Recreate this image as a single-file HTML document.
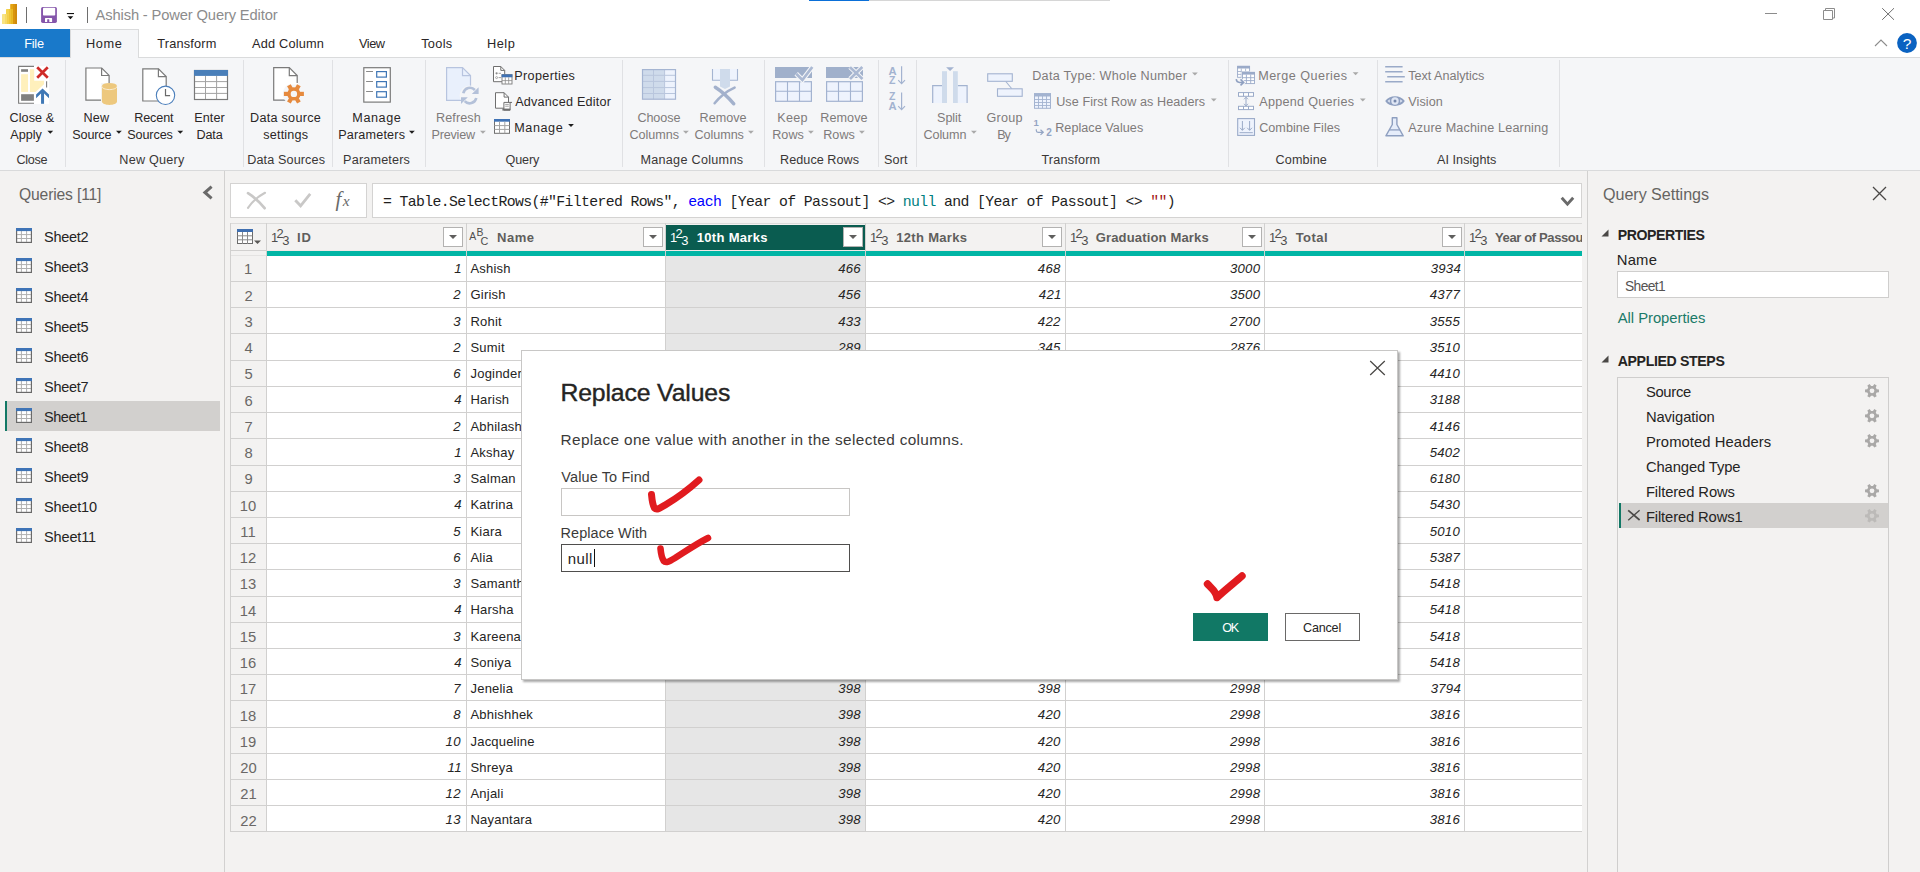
<!DOCTYPE html>
<html><head><meta charset="utf-8"><title>Power Query Editor</title>
<style>
html,body{margin:0;padding:0}
body{width:1920px;height:872px;overflow:hidden;position:relative;background:#f3f2f1;font-family:"Liberation Sans",sans-serif}
#app{position:absolute;left:0;top:0;width:1920px;height:872px;overflow:hidden}
#app div,#app svg,#app span{position:absolute}
#app .t span{position:static}
.t{white-space:pre;line-height:1;font-family:"Liberation Sans",sans-serif}
.sep{width:1px;top:60px;height:107px;background:#e0e1e4}
#tblclip{left:0;top:0;width:1582px;height:872px;overflow:hidden}
</style></head><body><div id="app">
<!-- title bar + tab row -->
<div style="left:0;top:0;width:1920px;height:57px;background:#fff"></div>
<div style="left:809px;top:0;width:60px;height:1px;background:#0a6fd8"></div>
<div style="left:869px;top:0;width:241px;height:1px;background:#d6d6d6"></div>
<!-- ribbon -->
<div style="left:0;top:57px;width:1920px;height:113px;background:#f5f6f8"></div>
<div style="left:0;top:57px;width:1920px;height:1px;background:#dadbdc"></div>
<div style="left:0;top:170px;width:1920px;height:1px;background:#d9dadb"></div>
<!-- File / Home tabs -->
<div style="left:0;top:29px;width:70px;height:28px;background:#1979ca"></div>
<div style="left:70px;top:29px;width:69px;height:29px;background:#f5f6f8;border:1px solid #dadbdc;border-bottom:none;box-sizing:border-box"></div>
<!-- ribbon separators -->
<div class="sep" style="left:65px"></div><div class="sep" style="left:243px"></div><div class="sep" style="left:332px"></div>
<div class="sep" style="left:425px"></div><div class="sep" style="left:622px"></div><div class="sep" style="left:764px"></div>
<div class="sep" style="left:878px"></div><div class="sep" style="left:916px"></div><div class="sep" style="left:1228px"></div>
<div class="sep" style="left:1377px"></div><div class="sep" style="left:1559px"></div>
<!-- left panel -->
<div style="left:224px;top:171px;width:1px;height:701px;background:#d2d1d0"></div>
<div style="left:5px;top:401px;width:215px;height:30px;background:#d2d0ce"></div>
<div style="left:5px;top:401px;width:2px;height:30px;background:#117865"></div>
<svg style="left:202px;top:185px" width="12" height="15" viewBox="0 0 12 15"><path d="M9.600 1.700L2.900 7.500l6.700 5.800" fill="none" stroke="#6a6a6a" stroke-width="3"/></svg>
<!-- formula bar -->
<div style="left:230px;top:183px;width:137px;height:35px;background:#fff;border:1px solid #d4d3d2;box-sizing:border-box"></div>
<div style="left:372px;top:183px;width:1210px;height:35px;background:#fff;border:1px solid #d4d3d2;box-sizing:border-box"></div>
<svg style="left:246px;top:191px" width="21" height="19" viewBox="0 0 21 19"><path d="M2 2.200C8 6 14 11.500 18.600 17.200" stroke="#c9c8c7" stroke-width="2.700" fill="none" stroke-linecap="round"/><path d="M19 1.800C12 5.500 6 11 2 16.800" stroke="#c9c8c7" stroke-width="2.100" fill="none" stroke-linecap="round"/></svg>
<svg style="left:293px;top:192px" width="20" height="17" viewBox="0 0 20 17"><path d="M2.300 8.200l5.300 5.600L17.200 1.800" stroke="#c9c8c7" stroke-width="2.800" fill="none"/></svg>
<span class="t" style="left:335.500px;top:188.600px;font-family:'Liberation Serif',serif;font-style:italic;font-size:21px;color:#6a6a6a">f</span><span class="t" style="left:342.800px;top:193.300px;font-family:'Liberation Serif',serif;font-style:italic;font-size:15.500px;color:#6a6a6a">x</span>
<svg style="left:1560px;top:196px" width="16" height="11" viewBox="0 0 16 11"><path d="M1.700 1.800L7.450 8.200l5.750-6.400" fill="none" stroke="#6a6a6a" stroke-width="2.900"/></svg>
<!-- right panel -->
<div style="left:1587px;top:171px;width:1px;height:701px;background:#d2d1d0"></div>
<svg style="left:1872px;top:186px" width="15" height="15" viewBox="0 0 15 15"><path d="M1 1l13 13M14 1L1 14" stroke="#4a4846" stroke-width="1.3" fill="none"/></svg>
<svg style="left:1601px;top:229px" width="8" height="8" viewBox="0 0 8 8"><path d="M7.5 0.5v7h-7z" fill="#4a4846"/></svg>
<svg style="left:1601px;top:355px" width="8" height="8" viewBox="0 0 8 8"><path d="M7.5 0.5v7h-7z" fill="#4a4846"/></svg>
<div style="left:1617px;top:271px;width:272px;height:27px;background:#fff;border:1px solid #cfcecd;box-sizing:border-box"></div>
<div style="left:1617px;top:377px;width:272px;height:520px;border:1px solid #cfcecd;box-sizing:border-box"></div>
<div style="left:1619px;top:503px;width:269px;height:25px;background:#d2d0ce"></div>
<div style="left:1619px;top:503px;width:2px;height:25px;background:#117865"></div>
<svg style="left:1627px;top:509px" width="14" height="12" viewBox="0 0 14 12"><path d="M1.200 1.400l11.400 9.600" stroke="#4a4846" stroke-width="1.700" fill="none"/><path d="M12.600 1.300L1.200 11.200" stroke="#4a4846" stroke-width="1.300" fill="none"/></svg>
<svg style="left:0;top:0" width="1920" height="872" viewBox="0 0 1920 872"><path d="M1876.73 389.17 L1878.97 389.45 L1878.97 392.15 L1876.73 392.43 L1875.77 394.08 L1876.66 396.16 L1874.31 397.51 L1872.95 395.71 L1871.05 395.71 L1869.69 397.51 L1867.34 396.16 L1868.23 394.08 L1867.27 392.43 L1865.03 392.15 L1865.03 389.45 L1867.27 389.17 L1868.23 387.52 L1867.34 385.44 L1869.69 384.09 L1871.05 385.89 L1872.95 385.89 L1874.31 384.09 L1876.66 385.44 L1875.77 387.52Z M1874.40 390.80 A2.4 2.4 0 1 0 1869.60 390.80 A2.4 2.4 0 1 0 1874.40 390.80Z" fill="#a9a8a7" fill-rule="evenodd"/><path d="M1876.73 414.17 L1878.97 414.45 L1878.97 417.15 L1876.73 417.43 L1875.77 419.08 L1876.66 421.16 L1874.31 422.51 L1872.95 420.71 L1871.05 420.71 L1869.69 422.51 L1867.34 421.16 L1868.23 419.08 L1867.27 417.43 L1865.03 417.15 L1865.03 414.45 L1867.27 414.17 L1868.23 412.52 L1867.34 410.44 L1869.69 409.09 L1871.05 410.89 L1872.95 410.89 L1874.31 409.09 L1876.66 410.44 L1875.77 412.52Z M1874.40 415.80 A2.4 2.4 0 1 0 1869.60 415.80 A2.4 2.4 0 1 0 1874.40 415.80Z" fill="#a9a8a7" fill-rule="evenodd"/><path d="M1876.73 439.17 L1878.97 439.45 L1878.97 442.15 L1876.73 442.43 L1875.77 444.08 L1876.66 446.16 L1874.31 447.51 L1872.95 445.71 L1871.05 445.71 L1869.69 447.51 L1867.34 446.16 L1868.23 444.08 L1867.27 442.43 L1865.03 442.15 L1865.03 439.45 L1867.27 439.17 L1868.23 437.52 L1867.34 435.44 L1869.69 434.09 L1871.05 435.89 L1872.95 435.89 L1874.31 434.09 L1876.66 435.44 L1875.77 437.52Z M1874.40 440.80 A2.4 2.4 0 1 0 1869.60 440.80 A2.4 2.4 0 1 0 1874.40 440.80Z" fill="#a9a8a7" fill-rule="evenodd"/><path d="M1876.73 489.17 L1878.97 489.45 L1878.97 492.15 L1876.73 492.43 L1875.77 494.08 L1876.66 496.16 L1874.31 497.51 L1872.95 495.71 L1871.05 495.71 L1869.69 497.51 L1867.34 496.16 L1868.23 494.08 L1867.27 492.43 L1865.03 492.15 L1865.03 489.45 L1867.27 489.17 L1868.23 487.52 L1867.34 485.44 L1869.69 484.09 L1871.05 485.89 L1872.95 485.89 L1874.31 484.09 L1876.66 485.44 L1875.77 487.52Z M1874.40 490.80 A2.4 2.4 0 1 0 1869.60 490.80 A2.4 2.4 0 1 0 1874.40 490.80Z" fill="#a9a8a7" fill-rule="evenodd"/><path d="M1876.73 514.17 L1878.97 514.45 L1878.97 517.15 L1876.73 517.43 L1875.77 519.08 L1876.66 521.16 L1874.31 522.51 L1872.95 520.71 L1871.05 520.71 L1869.69 522.51 L1867.34 521.16 L1868.23 519.08 L1867.27 517.43 L1865.03 517.15 L1865.03 514.45 L1867.27 514.17 L1868.23 512.52 L1867.34 510.44 L1869.69 509.09 L1871.05 510.89 L1872.95 510.89 L1874.31 509.09 L1876.66 510.44 L1875.77 512.52Z M1874.40 515.80 A2.4 2.4 0 1 0 1869.60 515.80 A2.4 2.4 0 1 0 1874.40 515.80Z" fill="#bcbab8" fill-rule="evenodd"/>
<g transform="translate(16 228)"><rect x="0.55" y="0.55" width="14.9" height="13.9" fill="#fff" stroke="#6a6a6a" stroke-width="1.1"/><path d="M5.4 3v11.5M10.6 3v11.5M0.5 6.6h15M0.5 10.5h15" stroke="#b0b0b0" stroke-width="1" fill="none"/><rect x="0.55" y="0.55" width="14.9" height="13.9" fill="none" stroke="#6a6a6a" stroke-width="1.1"/><rect x="0" y="0" width="16" height="3.1" fill="#3f74b6"/></g>
<g transform="translate(16 258)"><rect x="0.55" y="0.55" width="14.9" height="13.9" fill="#fff" stroke="#6a6a6a" stroke-width="1.1"/><path d="M5.4 3v11.5M10.6 3v11.5M0.5 6.6h15M0.5 10.5h15" stroke="#b0b0b0" stroke-width="1" fill="none"/><rect x="0.55" y="0.55" width="14.9" height="13.9" fill="none" stroke="#6a6a6a" stroke-width="1.1"/><rect x="0" y="0" width="16" height="3.1" fill="#3f74b6"/></g>
<g transform="translate(16 288)"><rect x="0.55" y="0.55" width="14.9" height="13.9" fill="#fff" stroke="#6a6a6a" stroke-width="1.1"/><path d="M5.4 3v11.5M10.6 3v11.5M0.5 6.6h15M0.5 10.5h15" stroke="#b0b0b0" stroke-width="1" fill="none"/><rect x="0.55" y="0.55" width="14.9" height="13.9" fill="none" stroke="#6a6a6a" stroke-width="1.1"/><rect x="0" y="0" width="16" height="3.1" fill="#3f74b6"/></g>
<g transform="translate(16 318)"><rect x="0.55" y="0.55" width="14.9" height="13.9" fill="#fff" stroke="#6a6a6a" stroke-width="1.1"/><path d="M5.4 3v11.5M10.6 3v11.5M0.5 6.6h15M0.5 10.5h15" stroke="#b0b0b0" stroke-width="1" fill="none"/><rect x="0.55" y="0.55" width="14.9" height="13.9" fill="none" stroke="#6a6a6a" stroke-width="1.1"/><rect x="0" y="0" width="16" height="3.1" fill="#3f74b6"/></g>
<g transform="translate(16 348)"><rect x="0.55" y="0.55" width="14.9" height="13.9" fill="#fff" stroke="#6a6a6a" stroke-width="1.1"/><path d="M5.4 3v11.5M10.6 3v11.5M0.5 6.6h15M0.5 10.5h15" stroke="#b0b0b0" stroke-width="1" fill="none"/><rect x="0.55" y="0.55" width="14.9" height="13.9" fill="none" stroke="#6a6a6a" stroke-width="1.1"/><rect x="0" y="0" width="16" height="3.1" fill="#3f74b6"/></g>
<g transform="translate(16 378)"><rect x="0.55" y="0.55" width="14.9" height="13.9" fill="#fff" stroke="#6a6a6a" stroke-width="1.1"/><path d="M5.4 3v11.5M10.6 3v11.5M0.5 6.6h15M0.5 10.5h15" stroke="#b0b0b0" stroke-width="1" fill="none"/><rect x="0.55" y="0.55" width="14.9" height="13.9" fill="none" stroke="#6a6a6a" stroke-width="1.1"/><rect x="0" y="0" width="16" height="3.1" fill="#3f74b6"/></g>
<g transform="translate(16 408)"><rect x="0.55" y="0.55" width="14.9" height="13.9" fill="#fff" stroke="#6a6a6a" stroke-width="1.1"/><path d="M5.4 3v11.5M10.6 3v11.5M0.5 6.6h15M0.5 10.5h15" stroke="#b0b0b0" stroke-width="1" fill="none"/><rect x="0.55" y="0.55" width="14.9" height="13.9" fill="none" stroke="#6a6a6a" stroke-width="1.1"/><rect x="0" y="0" width="16" height="3.1" fill="#3f74b6"/></g>
<g transform="translate(16 438)"><rect x="0.55" y="0.55" width="14.9" height="13.9" fill="#fff" stroke="#6a6a6a" stroke-width="1.1"/><path d="M5.4 3v11.5M10.6 3v11.5M0.5 6.6h15M0.5 10.5h15" stroke="#b0b0b0" stroke-width="1" fill="none"/><rect x="0.55" y="0.55" width="14.9" height="13.9" fill="none" stroke="#6a6a6a" stroke-width="1.1"/><rect x="0" y="0" width="16" height="3.1" fill="#3f74b6"/></g>
<g transform="translate(16 468)"><rect x="0.55" y="0.55" width="14.9" height="13.9" fill="#fff" stroke="#6a6a6a" stroke-width="1.1"/><path d="M5.4 3v11.5M10.6 3v11.5M0.5 6.6h15M0.5 10.5h15" stroke="#b0b0b0" stroke-width="1" fill="none"/><rect x="0.55" y="0.55" width="14.9" height="13.9" fill="none" stroke="#6a6a6a" stroke-width="1.1"/><rect x="0" y="0" width="16" height="3.1" fill="#3f74b6"/></g>
<g transform="translate(16 498)"><rect x="0.55" y="0.55" width="14.9" height="13.9" fill="#fff" stroke="#6a6a6a" stroke-width="1.1"/><path d="M5.4 3v11.5M10.6 3v11.5M0.5 6.6h15M0.5 10.5h15" stroke="#b0b0b0" stroke-width="1" fill="none"/><rect x="0.55" y="0.55" width="14.9" height="13.9" fill="none" stroke="#6a6a6a" stroke-width="1.1"/><rect x="0" y="0" width="16" height="3.1" fill="#3f74b6"/></g>
<g transform="translate(16 528)"><rect x="0.55" y="0.55" width="14.9" height="13.9" fill="#fff" stroke="#6a6a6a" stroke-width="1.1"/><path d="M5.4 3v11.5M10.6 3v11.5M0.5 6.6h15M0.5 10.5h15" stroke="#b0b0b0" stroke-width="1" fill="none"/><rect x="0.55" y="0.55" width="14.9" height="13.9" fill="none" stroke="#6a6a6a" stroke-width="1.1"/><rect x="0" y="0" width="16" height="3.1" fill="#3f74b6"/></g>
</svg>
<!-- table -->
<div id="tblclip">
<div style="left:230px;top:223px;width:1352px;height:28px;background:#f3f2f1"></div>
<div style="left:666px;top:225px;width:199px;height:25px;background:#0a5c50"></div>
<div style="left:267px;top:250px;width:1315px;height:1px;background:#f1e8e6"></div>
<div style="left:230px;top:251px;width:36px;height:580px;background:#f3f2f1"></div>
<div style="left:267px;top:256px;width:1315px;height:575px;background:#fff"></div>
<div style="left:666px;top:256px;width:199px;height:575px;background:#e6e6e6"></div>
<div style="left:267px;top:251px;width:1315px;height:5px;background:#01b5a5"></div>
<div style="left:230px;top:223px;width:1352px;height:1px;background:#dcdbda"></div>
<div style="left:230px;top:250px;width:37px;height:1px;background:#d1d0cf"></div>
<div style="left:230px;top:255px;width:37px;height:1px;background:#e4e3e2"></div>
<div style="left:230px;top:281px;width:1352px;height:1px;background:#d1d0cf"></div>
<div style="left:230px;top:307px;width:1352px;height:1px;background:#d1d0cf"></div>
<div style="left:230px;top:333px;width:1352px;height:1px;background:#d1d0cf"></div>
<div style="left:230px;top:360px;width:1352px;height:1px;background:#d1d0cf"></div>
<div style="left:230px;top:386px;width:1352px;height:1px;background:#d1d0cf"></div>
<div style="left:230px;top:412px;width:1352px;height:1px;background:#d1d0cf"></div>
<div style="left:230px;top:438px;width:1352px;height:1px;background:#d1d0cf"></div>
<div style="left:230px;top:465px;width:1352px;height:1px;background:#d1d0cf"></div>
<div style="left:230px;top:491px;width:1352px;height:1px;background:#d1d0cf"></div>
<div style="left:230px;top:517px;width:1352px;height:1px;background:#d1d0cf"></div>
<div style="left:230px;top:543px;width:1352px;height:1px;background:#d1d0cf"></div>
<div style="left:230px;top:569px;width:1352px;height:1px;background:#d1d0cf"></div>
<div style="left:230px;top:596px;width:1352px;height:1px;background:#d1d0cf"></div>
<div style="left:230px;top:622px;width:1352px;height:1px;background:#d1d0cf"></div>
<div style="left:230px;top:648px;width:1352px;height:1px;background:#d1d0cf"></div>
<div style="left:230px;top:674px;width:1352px;height:1px;background:#d1d0cf"></div>
<div style="left:230px;top:700px;width:1352px;height:1px;background:#d1d0cf"></div>
<div style="left:230px;top:727px;width:1352px;height:1px;background:#d1d0cf"></div>
<div style="left:230px;top:753px;width:1352px;height:1px;background:#d1d0cf"></div>
<div style="left:230px;top:779px;width:1352px;height:1px;background:#d1d0cf"></div>
<div style="left:230px;top:805px;width:1352px;height:1px;background:#d1d0cf"></div>
<div style="left:230px;top:831px;width:1352px;height:1px;background:#d1d0cf"></div>
<div style="left:230px;top:223px;width:1px;height:609px;background:#d1d0cf"></div>
<div style="left:266px;top:223px;width:1px;height:609px;background:#d1d0cf"></div>
<div style="left:466px;top:223px;width:1px;height:609px;background:#d1d0cf"></div>
<div style="left:665px;top:223px;width:1px;height:609px;background:#d1d0cf"></div>
<div style="left:865px;top:223px;width:1px;height:609px;background:#d1d0cf"></div>
<div style="left:1065px;top:223px;width:1px;height:609px;background:#d1d0cf"></div>
<div style="left:1264px;top:223px;width:1px;height:609px;background:#d1d0cf"></div>
<div style="left:1464px;top:223px;width:1px;height:609px;background:#d1d0cf"></div>
<div style="left:443.2px;top:227px;width:20px;height:20px;background:#fff;border:1px solid #b3b2b1;box-sizing:border-box"></div>
<svg style="left:449.2px;top:235px" width="8" height="4" viewBox="0 0 8 4"><path d="M0 0h8L4 4z" fill="#5f5e5d"/></svg>
<div style="left:642.8000000000001px;top:227px;width:20px;height:20px;background:#fff;border:1px solid #b3b2b1;box-sizing:border-box"></div>
<svg style="left:648.8000000000001px;top:235px" width="8" height="4" viewBox="0 0 8 4"><path d="M0 0h8L4 4z" fill="#5f5e5d"/></svg>
<div style="left:842.5px;top:227px;width:20px;height:20px;background:#fff;border:1px solid #b3b2b1;box-sizing:border-box"></div>
<svg style="left:848.5px;top:235px" width="8" height="4" viewBox="0 0 8 4"><path d="M0 0h8L4 4z" fill="#5f5e5d"/></svg>
<div style="left:1042.2px;top:227px;width:20px;height:20px;background:#fff;border:1px solid #b3b2b1;box-sizing:border-box"></div>
<svg style="left:1048.2px;top:235px" width="8" height="4" viewBox="0 0 8 4"><path d="M0 0h8L4 4z" fill="#5f5e5d"/></svg>
<div style="left:1241.8px;top:227px;width:20px;height:20px;background:#fff;border:1px solid #b3b2b1;box-sizing:border-box"></div>
<svg style="left:1247.8px;top:235px" width="8" height="4" viewBox="0 0 8 4"><path d="M0 0h8L4 4z" fill="#5f5e5d"/></svg>
<div style="left:1441.5px;top:227px;width:20px;height:20px;background:#fff;border:1px solid #b3b2b1;box-sizing:border-box"></div>
<svg style="left:1447.5px;top:235px" width="8" height="4" viewBox="0 0 8 4"><path d="M0 0h8L4 4z" fill="#5f5e5d"/></svg>
<span class="t" style="left:270.9px;top:231.5px;font-size:12.9px;color:#4f4e4d">1</span><span class="t" style="left:276.6px;top:227.5px;font-size:12.9px;color:#4f4e4d">2</span><span class="t" style="left:282.3px;top:235.0px;font-size:12.9px;color:#4f4e4d">3</span>
<span class="t" style="left:669.9px;top:231.5px;font-size:12.9px;color:#fff">1</span><span class="t" style="left:675.6px;top:227.5px;font-size:12.9px;color:#fff">2</span><span class="t" style="left:681.3px;top:235.0px;font-size:12.9px;color:#fff">3</span>
<span class="t" style="left:869.9px;top:231.5px;font-size:12.9px;color:#4f4e4d">1</span><span class="t" style="left:875.6px;top:227.5px;font-size:12.9px;color:#4f4e4d">2</span><span class="t" style="left:881.3px;top:235.0px;font-size:12.9px;color:#4f4e4d">3</span>
<span class="t" style="left:1069.9px;top:231.5px;font-size:12.9px;color:#4f4e4d">1</span><span class="t" style="left:1075.6px;top:227.5px;font-size:12.9px;color:#4f4e4d">2</span><span class="t" style="left:1081.3px;top:235.0px;font-size:12.9px;color:#4f4e4d">3</span>
<span class="t" style="left:1268.9px;top:231.5px;font-size:12.9px;color:#4f4e4d">1</span><span class="t" style="left:1274.6px;top:227.5px;font-size:12.9px;color:#4f4e4d">2</span><span class="t" style="left:1280.3px;top:235.0px;font-size:12.9px;color:#4f4e4d">3</span>
<span class="t" style="left:1468.9px;top:231.5px;font-size:12.9px;color:#4f4e4d">1</span><span class="t" style="left:1474.6px;top:227.5px;font-size:12.9px;color:#4f4e4d">2</span><span class="t" style="left:1480.3px;top:235.0px;font-size:12.9px;color:#4f4e4d">3</span>
<span class="t" style="left:469.2px;top:231.9px;font-size:10.4px;color:#4f4e4d">A</span><span class="t" style="left:476.5px;top:227.8px;font-size:10.4px;color:#4f4e4d">B</span><span class="t" style="left:480.6px;top:235.8px;font-size:10.8px;color:#4f4e4d">C</span>
<svg style="left:237px;top:229px" width="24" height="17" viewBox="0 0 24 17">
<rect x="0.5" y="0.5" width="15" height="14" fill="#fff" stroke="#6b6b6b"/><rect x="0" y="0" width="16" height="3" fill="#3f6fb0"/>
<path d="M0.5 6.8h15M0.5 10.8h15M5.5 3v12M10.5 3v12" stroke="#8a8a8a" fill="none"/><path d="M17 11.5h7L20.5 15z" fill="#5a5856"/></svg>
<span class="t" style="left:243.90px;top:262.02px;font-size:14.77px;color:#6a6866;">1</span>
<span class="t" style="left:454.20px;top:262.02px;font-size:13.2px;color:#252423;letter-spacing:0.250px;font-style:italic;">1</span>
<span class="t" style="left:470.50px;top:262.02px;font-size:13.0px;color:#252423;letter-spacing:0.200px;">Ashish</span>
<span class="t" style="left:838.13px;top:262.02px;font-size:13.2px;color:#252423;letter-spacing:0.250px;font-style:italic;">466</span>
<span class="t" style="left:1037.83px;top:262.02px;font-size:13.2px;color:#252423;letter-spacing:0.250px;font-style:italic;">468</span>
<span class="t" style="left:1229.95px;top:262.02px;font-size:13.2px;color:#252423;letter-spacing:0.250px;font-style:italic;">3000</span>
<span class="t" style="left:1430.65px;top:262.02px;font-size:13.2px;color:#252423;letter-spacing:0.250px;font-style:italic;">3934</span>
<span class="t" style="left:244.40px;top:289.02px;font-size:14.77px;color:#6a6866;">2</span>
<span class="t" style="left:453.20px;top:288.02px;font-size:13.2px;color:#252423;letter-spacing:0.250px;font-style:italic;">2</span>
<span class="t" style="left:470.50px;top:288.02px;font-size:13.0px;color:#252423;letter-spacing:0.200px;">Girish</span>
<span class="t" style="left:838.13px;top:288.02px;font-size:13.2px;color:#252423;letter-spacing:0.250px;font-style:italic;">456</span>
<span class="t" style="left:1038.83px;top:288.02px;font-size:13.2px;color:#252423;letter-spacing:0.250px;font-style:italic;">421</span>
<span class="t" style="left:1229.95px;top:288.02px;font-size:13.2px;color:#252423;letter-spacing:0.250px;font-style:italic;">3500</span>
<span class="t" style="left:1429.65px;top:288.02px;font-size:13.2px;color:#252423;letter-spacing:0.250px;font-style:italic;">4377</span>
<span class="t" style="left:244.40px;top:315.02px;font-size:14.77px;color:#6a6866;">3</span>
<span class="t" style="left:453.20px;top:315.02px;font-size:13.2px;color:#252423;letter-spacing:0.250px;font-style:italic;">3</span>
<span class="t" style="left:470.50px;top:315.02px;font-size:13.0px;color:#252423;letter-spacing:0.200px;">Rohit</span>
<span class="t" style="left:838.13px;top:315.02px;font-size:13.2px;color:#252423;letter-spacing:0.250px;font-style:italic;">433</span>
<span class="t" style="left:1037.83px;top:315.02px;font-size:13.2px;color:#252423;letter-spacing:0.250px;font-style:italic;">422</span>
<span class="t" style="left:1229.95px;top:315.02px;font-size:13.2px;color:#252423;letter-spacing:0.250px;font-style:italic;">2700</span>
<span class="t" style="left:1429.65px;top:315.02px;font-size:13.2px;color:#252423;letter-spacing:0.250px;font-style:italic;">3555</span>
<span class="t" style="left:244.40px;top:341.02px;font-size:14.77px;color:#6a6866;">4</span>
<span class="t" style="left:453.20px;top:341.02px;font-size:13.2px;color:#252423;letter-spacing:0.250px;font-style:italic;">2</span>
<span class="t" style="left:470.50px;top:341.02px;font-size:13.0px;color:#252423;letter-spacing:0.200px;">Sumit</span>
<span class="t" style="left:838.13px;top:341.02px;font-size:13.2px;color:#252423;letter-spacing:0.250px;font-style:italic;">289</span>
<span class="t" style="left:1037.83px;top:341.02px;font-size:13.2px;color:#252423;letter-spacing:0.250px;font-style:italic;">345</span>
<span class="t" style="left:1229.95px;top:341.02px;font-size:13.2px;color:#252423;letter-spacing:0.250px;font-style:italic;">2876</span>
<span class="t" style="left:1429.65px;top:341.02px;font-size:13.2px;color:#252423;letter-spacing:0.250px;font-style:italic;">3510</span>
<span class="t" style="left:244.40px;top:367.02px;font-size:14.77px;color:#6a6866;">5</span>
<span class="t" style="left:453.20px;top:367.02px;font-size:13.2px;color:#252423;letter-spacing:0.250px;font-style:italic;">6</span>
<span class="t" style="left:470.50px;top:367.02px;font-size:13.0px;color:#252423;letter-spacing:0.200px;">Joginder</span>
<span class="t" style="left:838.13px;top:367.02px;font-size:13.2px;color:#252423;letter-spacing:0.250px;font-style:italic;">410</span>
<span class="t" style="left:1037.83px;top:367.02px;font-size:13.2px;color:#252423;letter-spacing:0.250px;font-style:italic;">400</span>
<span class="t" style="left:1229.95px;top:367.02px;font-size:13.2px;color:#252423;letter-spacing:0.250px;font-style:italic;">3600</span>
<span class="t" style="left:1429.65px;top:367.02px;font-size:13.2px;color:#252423;letter-spacing:0.250px;font-style:italic;">4410</span>
<span class="t" style="left:244.40px;top:394.02px;font-size:14.77px;color:#6a6866;">6</span>
<span class="t" style="left:454.20px;top:393.02px;font-size:13.2px;color:#252423;letter-spacing:0.250px;font-style:italic;">4</span>
<span class="t" style="left:470.50px;top:393.02px;font-size:13.0px;color:#252423;letter-spacing:0.200px;">Harish</span>
<span class="t" style="left:838.13px;top:393.02px;font-size:13.2px;color:#252423;letter-spacing:0.250px;font-style:italic;">388</span>
<span class="t" style="left:1037.83px;top:393.02px;font-size:13.2px;color:#252423;letter-spacing:0.250px;font-style:italic;">300</span>
<span class="t" style="left:1229.95px;top:393.02px;font-size:13.2px;color:#252423;letter-spacing:0.250px;font-style:italic;">2500</span>
<span class="t" style="left:1429.65px;top:393.02px;font-size:13.2px;color:#252423;letter-spacing:0.250px;font-style:italic;">3188</span>
<span class="t" style="left:244.40px;top:420.02px;font-size:14.77px;color:#6a6866;">7</span>
<span class="t" style="left:453.20px;top:420.02px;font-size:13.2px;color:#252423;letter-spacing:0.250px;font-style:italic;">2</span>
<span class="t" style="left:470.50px;top:420.02px;font-size:13.0px;color:#252423;letter-spacing:0.200px;">Abhilasha</span>
<span class="t" style="left:838.13px;top:420.02px;font-size:13.2px;color:#252423;letter-spacing:0.250px;font-style:italic;">446</span>
<span class="t" style="left:1037.83px;top:420.02px;font-size:13.2px;color:#252423;letter-spacing:0.250px;font-style:italic;">400</span>
<span class="t" style="left:1229.95px;top:420.02px;font-size:13.2px;color:#252423;letter-spacing:0.250px;font-style:italic;">3300</span>
<span class="t" style="left:1429.65px;top:420.02px;font-size:13.2px;color:#252423;letter-spacing:0.250px;font-style:italic;">4146</span>
<span class="t" style="left:244.40px;top:446.02px;font-size:14.77px;color:#6a6866;">8</span>
<span class="t" style="left:454.20px;top:446.02px;font-size:13.2px;color:#252423;letter-spacing:0.250px;font-style:italic;">1</span>
<span class="t" style="left:470.50px;top:446.02px;font-size:13.0px;color:#252423;letter-spacing:0.200px;">Akshay</span>
<span class="t" style="left:838.13px;top:446.02px;font-size:13.2px;color:#252423;letter-spacing:0.250px;font-style:italic;">402</span>
<span class="t" style="left:1037.83px;top:446.02px;font-size:13.2px;color:#252423;letter-spacing:0.250px;font-style:italic;">500</span>
<span class="t" style="left:1229.95px;top:446.02px;font-size:13.2px;color:#252423;letter-spacing:0.250px;font-style:italic;">4500</span>
<span class="t" style="left:1429.65px;top:446.02px;font-size:13.2px;color:#252423;letter-spacing:0.250px;font-style:italic;">5402</span>
<span class="t" style="left:244.40px;top:472.02px;font-size:14.77px;color:#6a6866;">9</span>
<span class="t" style="left:453.20px;top:472.02px;font-size:13.2px;color:#252423;letter-spacing:0.250px;font-style:italic;">3</span>
<span class="t" style="left:470.50px;top:472.02px;font-size:13.0px;color:#252423;letter-spacing:0.200px;">Salman</span>
<span class="t" style="left:838.13px;top:472.02px;font-size:13.2px;color:#252423;letter-spacing:0.250px;font-style:italic;">480</span>
<span class="t" style="left:1037.83px;top:472.02px;font-size:13.2px;color:#252423;letter-spacing:0.250px;font-style:italic;">700</span>
<span class="t" style="left:1229.95px;top:472.02px;font-size:13.2px;color:#252423;letter-spacing:0.250px;font-style:italic;">5000</span>
<span class="t" style="left:1429.65px;top:472.02px;font-size:13.2px;color:#252423;letter-spacing:0.250px;font-style:italic;">6180</span>
<span class="t" style="left:239.79px;top:499.02px;font-size:14.77px;color:#6a6866;">10</span>
<span class="t" style="left:454.20px;top:498.02px;font-size:13.2px;color:#252423;letter-spacing:0.250px;font-style:italic;">4</span>
<span class="t" style="left:470.50px;top:498.02px;font-size:13.0px;color:#252423;letter-spacing:0.200px;">Katrina</span>
<span class="t" style="left:838.13px;top:498.02px;font-size:13.2px;color:#252423;letter-spacing:0.250px;font-style:italic;">430</span>
<span class="t" style="left:1037.83px;top:498.02px;font-size:13.2px;color:#252423;letter-spacing:0.250px;font-style:italic;">500</span>
<span class="t" style="left:1229.95px;top:498.02px;font-size:13.2px;color:#252423;letter-spacing:0.250px;font-style:italic;">4500</span>
<span class="t" style="left:1429.65px;top:498.02px;font-size:13.2px;color:#252423;letter-spacing:0.250px;font-style:italic;">5430</span>
<span class="t" style="left:240.34px;top:525.02px;font-size:14.77px;color:#6a6866;">11</span>
<span class="t" style="left:453.20px;top:525.02px;font-size:13.2px;color:#252423;letter-spacing:0.250px;font-style:italic;">5</span>
<span class="t" style="left:470.50px;top:525.02px;font-size:13.0px;color:#252423;letter-spacing:0.200px;">Kiara</span>
<span class="t" style="left:838.13px;top:525.02px;font-size:13.2px;color:#252423;letter-spacing:0.250px;font-style:italic;">410</span>
<span class="t" style="left:1037.83px;top:525.02px;font-size:13.2px;color:#252423;letter-spacing:0.250px;font-style:italic;">400</span>
<span class="t" style="left:1229.95px;top:525.02px;font-size:13.2px;color:#252423;letter-spacing:0.250px;font-style:italic;">4200</span>
<span class="t" style="left:1429.65px;top:525.02px;font-size:13.2px;color:#252423;letter-spacing:0.250px;font-style:italic;">5010</span>
<span class="t" style="left:239.79px;top:551.02px;font-size:14.77px;color:#6a6866;">12</span>
<span class="t" style="left:453.20px;top:551.02px;font-size:13.2px;color:#252423;letter-spacing:0.250px;font-style:italic;">6</span>
<span class="t" style="left:470.50px;top:551.02px;font-size:13.0px;color:#252423;letter-spacing:0.200px;">Alia</span>
<span class="t" style="left:838.13px;top:551.02px;font-size:13.2px;color:#252423;letter-spacing:0.250px;font-style:italic;">387</span>
<span class="t" style="left:1037.83px;top:551.02px;font-size:13.2px;color:#252423;letter-spacing:0.250px;font-style:italic;">500</span>
<span class="t" style="left:1229.95px;top:551.02px;font-size:13.2px;color:#252423;letter-spacing:0.250px;font-style:italic;">4500</span>
<span class="t" style="left:1429.65px;top:551.02px;font-size:13.2px;color:#252423;letter-spacing:0.250px;font-style:italic;">5387</span>
<span class="t" style="left:239.79px;top:577.02px;font-size:14.77px;color:#6a6866;">13</span>
<span class="t" style="left:453.20px;top:577.02px;font-size:13.2px;color:#252423;letter-spacing:0.250px;font-style:italic;">3</span>
<span class="t" style="left:470.50px;top:577.02px;font-size:13.0px;color:#252423;letter-spacing:0.200px;">Samantha</span>
<span class="t" style="left:838.13px;top:577.02px;font-size:13.2px;color:#252423;letter-spacing:0.250px;font-style:italic;">418</span>
<span class="t" style="left:1037.83px;top:577.02px;font-size:13.2px;color:#252423;letter-spacing:0.250px;font-style:italic;">500</span>
<span class="t" style="left:1229.95px;top:577.02px;font-size:13.2px;color:#252423;letter-spacing:0.250px;font-style:italic;">4500</span>
<span class="t" style="left:1429.65px;top:577.02px;font-size:13.2px;color:#252423;letter-spacing:0.250px;font-style:italic;">5418</span>
<span class="t" style="left:239.79px;top:604.02px;font-size:14.77px;color:#6a6866;">14</span>
<span class="t" style="left:454.20px;top:603.02px;font-size:13.2px;color:#252423;letter-spacing:0.250px;font-style:italic;">4</span>
<span class="t" style="left:470.50px;top:603.02px;font-size:13.0px;color:#252423;letter-spacing:0.200px;">Harsha</span>
<span class="t" style="left:838.13px;top:603.02px;font-size:13.2px;color:#252423;letter-spacing:0.250px;font-style:italic;">418</span>
<span class="t" style="left:1037.83px;top:603.02px;font-size:13.2px;color:#252423;letter-spacing:0.250px;font-style:italic;">500</span>
<span class="t" style="left:1229.95px;top:603.02px;font-size:13.2px;color:#252423;letter-spacing:0.250px;font-style:italic;">4500</span>
<span class="t" style="left:1429.65px;top:603.02px;font-size:13.2px;color:#252423;letter-spacing:0.250px;font-style:italic;">5418</span>
<span class="t" style="left:239.79px;top:630.02px;font-size:14.77px;color:#6a6866;">15</span>
<span class="t" style="left:453.20px;top:630.02px;font-size:13.2px;color:#252423;letter-spacing:0.250px;font-style:italic;">3</span>
<span class="t" style="left:470.50px;top:630.02px;font-size:13.0px;color:#252423;letter-spacing:0.200px;">Kareena</span>
<span class="t" style="left:838.13px;top:630.02px;font-size:13.2px;color:#252423;letter-spacing:0.250px;font-style:italic;">418</span>
<span class="t" style="left:1037.83px;top:630.02px;font-size:13.2px;color:#252423;letter-spacing:0.250px;font-style:italic;">500</span>
<span class="t" style="left:1229.95px;top:630.02px;font-size:13.2px;color:#252423;letter-spacing:0.250px;font-style:italic;">4500</span>
<span class="t" style="left:1429.65px;top:630.02px;font-size:13.2px;color:#252423;letter-spacing:0.250px;font-style:italic;">5418</span>
<span class="t" style="left:239.79px;top:656.02px;font-size:14.77px;color:#6a6866;">16</span>
<span class="t" style="left:454.20px;top:656.02px;font-size:13.2px;color:#252423;letter-spacing:0.250px;font-style:italic;">4</span>
<span class="t" style="left:470.50px;top:656.02px;font-size:13.0px;color:#252423;letter-spacing:0.200px;">Soniya</span>
<span class="t" style="left:838.13px;top:656.02px;font-size:13.2px;color:#252423;letter-spacing:0.250px;font-style:italic;">418</span>
<span class="t" style="left:1037.83px;top:656.02px;font-size:13.2px;color:#252423;letter-spacing:0.250px;font-style:italic;">500</span>
<span class="t" style="left:1229.95px;top:656.02px;font-size:13.2px;color:#252423;letter-spacing:0.250px;font-style:italic;">4500</span>
<span class="t" style="left:1429.65px;top:656.02px;font-size:13.2px;color:#252423;letter-spacing:0.250px;font-style:italic;">5418</span>
<span class="t" style="left:239.79px;top:682.02px;font-size:14.77px;color:#6a6866;">17</span>
<span class="t" style="left:453.20px;top:682.02px;font-size:13.2px;color:#252423;letter-spacing:0.250px;font-style:italic;">7</span>
<span class="t" style="left:470.50px;top:682.02px;font-size:13.0px;color:#252423;letter-spacing:0.200px;">Jenelia</span>
<span class="t" style="left:838.13px;top:682.02px;font-size:13.2px;color:#252423;letter-spacing:0.250px;font-style:italic;">398</span>
<span class="t" style="left:1037.83px;top:682.02px;font-size:13.2px;color:#252423;letter-spacing:0.250px;font-style:italic;">398</span>
<span class="t" style="left:1229.95px;top:682.02px;font-size:13.2px;color:#252423;letter-spacing:0.250px;font-style:italic;">2998</span>
<span class="t" style="left:1430.65px;top:682.02px;font-size:13.2px;color:#252423;letter-spacing:0.250px;font-style:italic;">3794</span>
<span class="t" style="left:239.79px;top:709.02px;font-size:14.77px;color:#6a6866;">18</span>
<span class="t" style="left:453.20px;top:708.02px;font-size:13.2px;color:#252423;letter-spacing:0.250px;font-style:italic;">8</span>
<span class="t" style="left:470.50px;top:708.02px;font-size:13.0px;color:#252423;letter-spacing:0.200px;">Abhishhek</span>
<span class="t" style="left:838.13px;top:708.02px;font-size:13.2px;color:#252423;letter-spacing:0.250px;font-style:italic;">398</span>
<span class="t" style="left:1037.83px;top:708.02px;font-size:13.2px;color:#252423;letter-spacing:0.250px;font-style:italic;">420</span>
<span class="t" style="left:1229.95px;top:708.02px;font-size:13.2px;color:#252423;letter-spacing:0.250px;font-style:italic;">2998</span>
<span class="t" style="left:1429.65px;top:708.02px;font-size:13.2px;color:#252423;letter-spacing:0.250px;font-style:italic;">3816</span>
<span class="t" style="left:239.79px;top:735.02px;font-size:14.77px;color:#6a6866;">19</span>
<span class="t" style="left:445.62px;top:735.02px;font-size:13.2px;color:#252423;letter-spacing:0.250px;font-style:italic;">10</span>
<span class="t" style="left:470.50px;top:735.02px;font-size:13.0px;color:#252423;letter-spacing:0.200px;">Jacqueline</span>
<span class="t" style="left:838.13px;top:735.02px;font-size:13.2px;color:#252423;letter-spacing:0.250px;font-style:italic;">398</span>
<span class="t" style="left:1037.83px;top:735.02px;font-size:13.2px;color:#252423;letter-spacing:0.250px;font-style:italic;">420</span>
<span class="t" style="left:1229.95px;top:735.02px;font-size:13.2px;color:#252423;letter-spacing:0.250px;font-style:italic;">2998</span>
<span class="t" style="left:1429.65px;top:735.02px;font-size:13.2px;color:#252423;letter-spacing:0.250px;font-style:italic;">3816</span>
<span class="t" style="left:240.29px;top:761.02px;font-size:14.77px;color:#6a6866;">20</span>
<span class="t" style="left:447.60px;top:761.02px;font-size:13.2px;color:#252423;letter-spacing:0.250px;font-style:italic;">11</span>
<span class="t" style="left:470.50px;top:761.02px;font-size:13.0px;color:#252423;letter-spacing:0.200px;">Shreya</span>
<span class="t" style="left:838.13px;top:761.02px;font-size:13.2px;color:#252423;letter-spacing:0.250px;font-style:italic;">398</span>
<span class="t" style="left:1037.83px;top:761.02px;font-size:13.2px;color:#252423;letter-spacing:0.250px;font-style:italic;">420</span>
<span class="t" style="left:1229.95px;top:761.02px;font-size:13.2px;color:#252423;letter-spacing:0.250px;font-style:italic;">2998</span>
<span class="t" style="left:1429.65px;top:761.02px;font-size:13.2px;color:#252423;letter-spacing:0.250px;font-style:italic;">3816</span>
<span class="t" style="left:240.29px;top:787.02px;font-size:14.77px;color:#6a6866;">21</span>
<span class="t" style="left:445.62px;top:787.02px;font-size:13.2px;color:#252423;letter-spacing:0.250px;font-style:italic;">12</span>
<span class="t" style="left:470.50px;top:787.02px;font-size:13.0px;color:#252423;letter-spacing:0.200px;">Anjali</span>
<span class="t" style="left:838.13px;top:787.02px;font-size:13.2px;color:#252423;letter-spacing:0.250px;font-style:italic;">398</span>
<span class="t" style="left:1037.83px;top:787.02px;font-size:13.2px;color:#252423;letter-spacing:0.250px;font-style:italic;">420</span>
<span class="t" style="left:1229.95px;top:787.02px;font-size:13.2px;color:#252423;letter-spacing:0.250px;font-style:italic;">2998</span>
<span class="t" style="left:1429.65px;top:787.02px;font-size:13.2px;color:#252423;letter-spacing:0.250px;font-style:italic;">3816</span>
<span class="t" style="left:240.29px;top:814.02px;font-size:14.77px;color:#6a6866;">22</span>
<span class="t" style="left:445.62px;top:813.02px;font-size:13.2px;color:#252423;letter-spacing:0.250px;font-style:italic;">13</span>
<span class="t" style="left:470.50px;top:813.02px;font-size:13.0px;color:#252423;letter-spacing:0.200px;">Nayantara</span>
<span class="t" style="left:838.13px;top:813.02px;font-size:13.2px;color:#252423;letter-spacing:0.250px;font-style:italic;">398</span>
<span class="t" style="left:1037.83px;top:813.02px;font-size:13.2px;color:#252423;letter-spacing:0.250px;font-style:italic;">420</span>
<span class="t" style="left:1229.95px;top:813.02px;font-size:13.2px;color:#252423;letter-spacing:0.250px;font-style:italic;">2998</span>
<span class="t" style="left:1429.65px;top:813.02px;font-size:13.2px;color:#252423;letter-spacing:0.250px;font-style:italic;">3816</span>
<span class="t" style="left:297.00px;top:231.02px;font-size:13.04px;color:#605e5c;letter-spacing:0.880px;font-weight:700;">ID</span>
<span class="t" style="left:497.00px;top:231.02px;font-size:13.04px;color:#605e5c;letter-spacing:0.502px;font-weight:700;">Name</span>
<span class="t" style="left:696.80px;top:231.02px;font-size:13.04px;color:#ffffff;letter-spacing:0.285px;font-weight:700;">10th Marks</span>
<span class="t" style="left:896.30px;top:231.02px;font-size:13.04px;color:#605e5c;letter-spacing:0.285px;font-weight:700;">12th Marks</span>
<span class="t" style="left:1095.70px;top:231.02px;font-size:13.04px;color:#605e5c;letter-spacing:0.144px;font-weight:700;">Graduation Marks</span>
<span class="t" style="left:1295.70px;top:231.02px;font-size:13.04px;color:#605e5c;letter-spacing:0.440px;font-weight:700;">Total</span>
<span class="t" style="left:1495.00px;top:231.02px;font-size:13.04px;color:#605e5c;letter-spacing:-0.388px;font-weight:700;">Year of Passout</span>
</div>
<svg style="left:0;top:0" width="1920" height="175" viewBox="0 0 1920 175">

<!-- title bar: Power BI logo -->
<rect x="10.2" y="3.9" width="6.8" height="20.1" rx="0.6" fill="#e4a410"/><rect x="13" y="3.9" width="4" height="20.1" rx="0.6" fill="#d9950d"/><rect x="15.2" y="3.9" width="1.8" height="20.1" rx="0.5" fill="#cf8a0c"/>
<rect x="6" y="9.1" width="6.8" height="14.9" rx="0.6" fill="#f4d24a"/><rect x="9" y="9.1" width="3.8" height="14.9" rx="0.6" fill="#efc433"/><rect x="11" y="9.1" width="1.8" height="14.9" rx="0.5" fill="#e9b821"/>
<rect x="2" y="14" width="6.9" height="10" rx="0.6" fill="#f8e382"/><rect x="5" y="14" width="3.9" height="10" rx="0.6" fill="#f6da66"/><rect x="7" y="14" width="1.9" height="10" rx="0.5" fill="#f3cf48"/>
<rect x="26" y="7" width="1" height="16" fill="#6e6e6e"/><rect x="87" y="7" width="1" height="16" fill="#6e6e6e"/>
<!-- save icon -->
<rect x="41.1" y="7" width="15.8" height="15.9" rx="1.6" fill="#8556ab"/>
<rect x="43" y="7.8" width="12.2" height="7.8" rx="0.8" fill="#fff"/>
<path d="M45 18.6q0-.6.6-.6h5.9q.6 0 .6.6V21.9H49.3V19.6q0-.4-.4-.4h-1.3q-.4 0-.4.4v2.3H45z" fill="#fff"/>
<rect x="66.9" y="13" width="7.1" height="1.1" fill="#111"/><path d="M67.6 16.3h5.7L70.45 19.2z" fill="#111"/>
<!-- window controls -->
<path d="M1765 13.500h12" stroke="#8c8c8c" stroke-width="1"/>
<path d="M1823.500 10.500h9v9h-9z M1825.500 10.500v-2h9v9.500h-2" fill="none" stroke="#8c8c8c" stroke-width="1"/>
<path d="M1882.200 8.200l11.800 11.600M1894 8.200L1882.200 19.800" stroke="#6f6f6f" stroke-width="1" fill="none"/>
<path d="M1875 46l6-6 6 6" fill="none" stroke="#8c8c8c" stroke-width="1.100"/>
<circle cx="1907" cy="43" r="9.900" fill="#0a62c1"/>
<text x="1907" y="48.600" text-anchor="middle" font-family="Liberation Sans" font-weight="400" font-size="15.500" fill="#fff">?</text>

<!-- Close & Apply -->
<path d="M34 66.4H18.6v36.9H34" fill="#fff" stroke="#7d7d7d" stroke-width="1.1"/>
<rect x="34" y="66" width="15" height="38" fill="#fff"/>
<path d="M46.6 81.3v6.2" stroke="#7d7d7d" stroke-width="1.1"/>
<rect x="21.1" y="69.2" width="6.9" height="2.6" fill="#808080"/>
<rect x="21.1" y="74.2" width="6.9" height="17.7" fill="#fff0bc"/>
<path d="M30 69.2h4.2v11.5h9.8v3.6L35.6 91.9H30z" fill="#fff0bc"/>
<rect x="21.1" y="94.2" width="12.8" height="6.6" fill="#808080"/>
<path d="M37.2 67.2l10.6 10.6M47.8 67.2L37.2 77.8" stroke="#cf2b28" stroke-width="2.7" fill="none"/>
<path d="M42.55 92v11.8" stroke="#3f78b5" stroke-width="3" fill="none"/>
<path d="M36.1 98.2V94.6L42.55 88.4 49 94.6v3.6L42.55 92z" fill="#3f78b5"/>
<!-- New Source -->
<path d="M85.9 68h15.8l7.4 7.4v24.8H85.9z" fill="#fff" stroke="#7a7a7a" stroke-width="1.2"/>
<path d="M101.6 68v7.5h7.5" fill="none" stroke="#7a7a7a" stroke-width="1.2"/>
<rect x="101" y="83" width="17" height="22.5" fill="#f5f6f8"/>
<path d="M101.9 86.2v15.4c0 1.9 3.4 3.4 7.55 3.4s7.55-1.5 7.55-3.4V86.2z" fill="#edc87e"/>
<ellipse cx="109.45" cy="86.2" rx="7.55" ry="3.3" fill="#edc87e"/>
<path d="M101.9 86.4c0 1.8 3.4 3.2 7.55 3.2s7.55-1.4 7.55-3.2" fill="none" stroke="#faf1dc" stroke-width="0.9"/>
<!-- Recent Sources -->
<path d="M142.8 68.8h15.7l7.7 7.7v24.5h-23.4z" fill="#fff" stroke="#7a7a7a" stroke-width="1.2"/>
<path d="M158.4 68.8v7.8h7.8" fill="none" stroke="#7a7a7a" stroke-width="1.2"/>
<circle cx="165.5" cy="95.3" r="9.2" fill="#fff" stroke="#4a7ebb" stroke-width="1.1"/>
<path d="M165.5 89v6.6h4.6" fill="none" stroke="#6a6a6a" stroke-width="1.2"/>
<!-- Enter Data -->
<rect x="194.5" y="70.5" width="33" height="29" fill="#fff" stroke="#7a7a7a" stroke-width="1.1"/>
<rect x="194" y="70" width="34" height="5.7" fill="#4a7fb9"/>
<path d="M205.5 75.7v24M216.6 75.7v24M194.5 81.6h33M194.5 87.5h33M194.5 93.4h33" stroke="#a3a3a3" stroke-width="1" fill="none"/>
<rect x="194.5" y="70.5" width="33" height="29" fill="none" stroke="#7a7a7a" stroke-width="1.1"/>
<rect x="194" y="70" width="34" height="5.7" fill="#4a7fb9"/>
<!-- Data source settings -->
<path d="M273.7 67.7h15.6l7.9 7.9v24.5h-23.5z" fill="#fff" stroke="#7a7a7a" stroke-width="1.2"/>
<path d="M289.3 67.7v7.9h7.9" fill="none" stroke="#7a7a7a" stroke-width="1.2"/>
<circle cx="293.9" cy="93.9" r="11" fill="#f5f6f8"/>
<rect x="282" y="83" width="16" height="1.5" fill="#fff"/>
<g transform="translate(293.9 93.9)" fill="#e68a3e">
<circle r="6.6"/>
<rect x="-10" y="-2.1" width="20" height="4.2"/>
<rect x="-10" y="-2.1" width="20" height="4.2" transform="rotate(60)"/>
<rect x="-10" y="-2.1" width="20" height="4.2" transform="rotate(120)"/>
<circle r="3.2" fill="#f5f6f8"/>
</g>
<!-- Manage Parameters -->
<rect x="363.8" y="67.7" width="26.5" height="34.4" fill="#fff" stroke="#7a7a7a" stroke-width="1.2"/>
<path d="M366.1 71.5h6.9M366.1 81.5h6.9M366.1 91.5h6.9" stroke="#8a8a8a" stroke-width="1" fill="none"/>
<g fill="#fff" stroke="#3e76b6" stroke-width="1.2"><rect x="376.7" y="71.6" width="9.7" height="5.5"/><rect x="376.7" y="81.6" width="9.7" height="5.5"/><rect x="376.7" y="91.7" width="9.7" height="5.5"/></g>
<!-- Refresh Preview (disabled) -->
<path d="M446.6 67.6h15.9l8 8v24.8h-23.9z" fill="#e9f0fc" stroke="#b7c4df" stroke-width="1.2"/>
<path d="M462.5 67.6v8h8" fill="none" stroke="#b7c4df" stroke-width="1.2"/>
<circle cx="469.8" cy="95.6" r="10.2" fill="#f5f6f8"/>
<g fill="none" stroke="#b4c1d9" stroke-width="2.6">
<path d="M463.3 93.2a6.8 6.8 0 0 1 11.6-3.2"/>
<path d="M476.3 98a6.8 6.8 0 0 1-11.6 3.2"/>
</g>
<path d="M478.6 87.2v6.8h-6.8z" fill="#b4c1d9"/><path d="M461 104v-6.8h6.8z" fill="#b4c1d9"/>
<!-- Properties small -->
<path d="M493.5 66.5h7.3l3.9 3.9v11.3h-11.2z" fill="#fff" stroke="#6f6f6f" stroke-width="1"/>
<path d="M500.8 66.5v3.9h3.9" fill="none" stroke="#6f6f6f" stroke-width="1"/>
<circle cx="496.6" cy="73.3" r="1.1" fill="#8a8a8a"/><circle cx="496.6" cy="77.6" r="1" fill="none" stroke="#8a8a8a" stroke-width="0.7"/>
<path d="M498.6 73.3h2.4M498.6 77.6h2.4" stroke="#8a8a8a" stroke-width="0.8"/>
<rect x="502" y="74.6" width="10" height="9.4" fill="#fff" stroke="#7a7a7a" stroke-width="0.9"/>
<rect x="501.6" y="74.4" width="10.8" height="2.9" fill="#3f72b5"/>
<path d="M505.3 77.3v6.6M508.7 77.3v6.6M502 80.6h10" stroke="#8d8d8d" stroke-width="0.8"/>
<!-- Advanced Editor small -->
<path d="M495.5 92.7h8.6l4.4 4.4v11.1h-13z" fill="#fff" stroke="#6f6f6f" stroke-width="1"/>
<path d="M504.1 92.7v4.4h4.4" fill="none" stroke="#6f6f6f" stroke-width="1"/>
<path d="M503.9 102.4h7.9v.1h-1.7v7.6h-6.2z" fill="#fff" stroke="#6f6f6f" stroke-width="1"/>
<path d="M505.2 104.4h3.6M505.2 106.2h3.6" stroke="#8a8a8a" stroke-width="0.8"/>
<rect x="502.4" y="108.6" width="7.8" height="2" fill="#6f6f6f"/>
<!-- Manage small -->
<rect x="494.5" y="119.5" width="15" height="13.8" fill="#fff" stroke="#6f6f6f" stroke-width="1"/>
<rect x="494" y="119" width="16" height="2.7" fill="#3f72b5"/>
<path d="M499.5 121.7v11.6M504.8 121.7v11.6M494.5 125.6h15M494.5 129.4h15" stroke="#a3a3a3" stroke-width="1"/>
<!-- Choose Columns -->
<rect x="642.5" y="69.6" width="22.1" height="29.6" fill="#cfdbeb"/><rect x="664.6" y="69.6" width="10.9" height="29.6" fill="#eef3fd"/>
<path d="M653.5 69.6v29.6M664.6 69.6v29.6M642.5 75.3h33M642.5 81.4h33M642.5 87.6h33M642.5 93.5h33" stroke="#b9c6dd" stroke-width="1" fill="none"/>
<rect x="642.5" y="69.6" width="33" height="29.6" fill="none" stroke="#a5b5d2" stroke-width="1.2"/>
<!-- Remove Columns -->
<path d="M712.5 69.1v11.2h25V69.1" fill="#eef3fd" stroke="#a5b5d2" stroke-width="1.1"/>
<path d="M720 69.1h10v17.3l-5 2.6-5-2.6z" fill="#cfdbeb"/>
<path d="M715.300 87.200C722 91.500 728.500 97.500 733.800 103.800" fill="none" stroke="#a3b1cc" stroke-width="3.400" stroke-linecap="round"/>
<path d="M734.600 87.600C727 91 720 96.500 714.600 103.300" fill="none" stroke="#a3b1cc" stroke-width="2.500" stroke-linecap="round"/>
<!-- Keep Rows -->
<rect x="775" y="67" width="37" height="11" fill="#a0b0cb"/>
<rect x="775.6" y="81.700" width="35.800" height="19.600" fill="#eef3fd" stroke="#a3b3d0" stroke-width="1.2"/>
<path d="M787.5 81.700v19.600M799.5 81.700v19.600M775.6 91.300h35.800" stroke="#a3b3d0" stroke-width="1.1"/>
<path d="M796.2 73.800l6.200 6.200 9.900-13" fill="none" stroke="#f5f6f8" stroke-width="4.800"/>
<path d="M796.2 73.800l6.200 6.200 9.900-13" fill="none" stroke="#abb9d3" stroke-width="2.800"/>
<!-- Remove Rows -->
<rect x="826" y="67" width="37" height="11" fill="#a0b0cb"/>
<rect x="826.6" y="81.700" width="35.800" height="19.600" fill="#eef3fd" stroke="#a3b3d0" stroke-width="1.2"/>
<path d="M838.5 81.700v19.600M850.5 81.700v19.600M826.6 91.300h35.800" stroke="#a3b3d0" stroke-width="1.1"/>
<path d="M850 67.200l12.500 11.800M862.300 67l-12.300 12" fill="none" stroke="#f5f6f8" stroke-width="4.600"/>
<path d="M850 67.200l12.500 11.800M862.300 67l-12.300 12" fill="none" stroke="#abb9d3" stroke-width="2.600"/>
<!-- Sort icons -->
<g font-family="Liberation Sans" font-weight="700" fill="#a3b3d0" font-size="11.200">
<text x="888.400" y="74.500">A</text><text x="889" y="83.800" font-size="10.500">Z</text>
<text x="889" y="99.800" font-size="10.500">Z</text><text x="888.400" y="110">A</text></g>
<g fill="none" stroke="#a3b3d0" stroke-width="1.200"><path d="M901.600 66.300v17M898.200 80.200l3.400 3.400 3.400-3.400"/><path d="M901.600 92.400v17M898.200 106.200l3.400 3.400 3.400-3.400"/></g>
<!-- Split Column -->
<path d="M946.100 67.200h7.900l-3.950 3.700z" fill="#a3b3d0"/>
<path d="M932.700 103V85.600h9.300V103z" fill="#eef3fd"/><path d="M957.800 103V85.600h9.300V103z" fill="#eef3fd"/>
<path d="M932.700 103V85.600h9.300M957.800 85.600h9.300V103" fill="none" stroke="#a3b3d0" stroke-width="1.200"/>
<rect x="942" y="71.200" width="5" height="31.800" fill="#cfdbeb"/><rect x="953" y="71.200" width="4.800" height="31.800" fill="#cfdbeb"/>
<!-- Group By -->
<g fill="#eef3fd" stroke="#a3b3d0" stroke-width="1.100"><rect x="987.700" y="73.800" width="24.600" height="7.500"/><rect x="997.500" y="88.800" width="24.700" height="7.500"/><path d="M1005.800 81.500l5.800 7" fill="none"/></g>
<!-- Data type arrows etc are text arrows -->
<!-- Use first row as headers -->
<rect x="1034.500" y="93.700" width="16" height="14.600" fill="#eef3fd" stroke="#a3b3d0" stroke-width="1"/>
<rect x="1034" y="93.200" width="17" height="3.300" fill="#a3b3d0"/>
<path d="M1038.500 93.500v14.800M1042.500 93.500v14.800M1046.500 93.500v14.800M1034.500 99.500h16M1034.500 102.500h16M1034.500 105.500h16" stroke="#a3b3d0" stroke-width="0.900"/>
<!-- Replace values -->
<g font-family="Liberation Sans" font-weight="700" fill="#94a5c4" font-size="9.500"><text x="1033.600" y="125.600">1</text><text x="1046.300" y="135.700" font-size="10">2</text></g>
<path d="M1036.300 129.300v1.200q0 1.800 1.800 1.800h4.800M1040.500 129.700l2.800 2.600-2.800 2.600" fill="none" stroke="#94a5c4" stroke-width="1.200"/>
<!-- Merge Queries -->
<rect x="1237.600" y="66.300" width="12" height="11" fill="#fff" stroke="#9aaac8" stroke-width="0.900"/><rect x="1237.200" y="65.900" width="12.800" height="2.600" fill="#9aaac8"/>
<path d="M1241.300 68.500v8.800M1245.600 68.500v8.800M1237.600 71.500h12M1237.600 74.400h12" stroke="#9aaac8" stroke-width="0.800"/>
<rect x="1241.500" y="71.500" width="14" height="13" fill="#f5f6f8"/>
<rect x="1242.500" y="72.400" width="12" height="11.200" fill="#fff" stroke="#9aaac8" stroke-width="0.900"/><rect x="1242" y="71.900" width="13" height="2.700" fill="#9aaac8"/>
<path d="M1246.400 74.600v9M1250.700 74.600v9M1242.500 77.700h12M1242.500 80.600h12" stroke="#9aaac8" stroke-width="0.900"/>
<path d="M1236.2 79.200q.400 3.200 3.400 3.200h3.600M1240.500 79.400l3.200 3-3.200 3" fill="none" stroke="#f5f6f8" stroke-width="3.200"/><path d="M1236.2 79.200q.400 3.200 3.400 3.200h3.600M1240.500 79.400l3.200 3-3.200 3" fill="none" stroke="#8e9fc0" stroke-width="1.500"/>
<!-- Append Queries -->
<g fill="#fff" stroke="#9aaac8" stroke-width="1"><rect x="1238.500" y="92.600" width="15" height="3.700"/><rect x="1238.500" y="106.300" width="15" height="3.300"/></g>
<path d="M1243.500 92.600v3.700M1248.500 92.600v3.700M1243.500 106.300v3.300M1248.500 106.300v3.300M1246 97v9M1244 99.300l2-2 2 2M1244 103.800l2 2 2-2" fill="none" stroke="#9aaac8" stroke-width="1"/>
<!-- Combine Files -->
<rect x="1237.700" y="118.600" width="16.800" height="16.800" fill="#eef3fd" stroke="#9aaac8" stroke-width="1.100"/>
<path d="M1242.400 121v9.300M1249.600 121v9.300M1240 127.800l2.400 2.500 2.400-2.500M1247.200 127.800l2.400 2.500 2.400-2.500M1239.500 132.700h13.300" fill="none" stroke="#9aaac8" stroke-width="1"/>
<!-- Text analytics -->
<path d="M1385.200 66.700h17.400M1385.200 71.700h17.400M1387.200 76.700h17.600M1385.200 81.700h17.400" stroke="#9aaac8" stroke-width="1.500"/>
<!-- Vision -->
<path d="M1385.200 101c4-6.500 15.600-6.500 19.600 0-4 6.500-15.600 6.500-19.600 0z" fill="#8e9fc0"/>
<circle cx="1395" cy="101" r="3.700" fill="#dfe6f4"/><circle cx="1395" cy="101" r="1.500" fill="#7587ab"/>
<path d="M1387.500 101l2.300-1.700v3.400zM1402.500 101l-2.300-1.700v3.400z" fill="#dfe6f4"/>
<!-- Azure ML flask -->
<path d="M1392.300 117.700h4.600v6.800l6.300 11.300h-17.300l6.400-11.300z" fill="#e6edfa" stroke="#8e9fc0" stroke-width="1.400" stroke-linejoin="round"/>
<path d="M1389.300 129.900h10.700" stroke="#8e9fc0" stroke-width="1.300"/>
<!-- dropdown arrows (enabled black) -->
<g fill="#1e1e1e"><path d="M47.400 130.800h5.800l-2.900 3z"/><path d="M116 130.800h5.800l-2.900 3z"/><path d="M177.400 130.800h5.800l-2.900 3z"/><path d="M409 130.800h5.800l-2.900 3z"/><path d="M568.100 124.100h5.800l-2.900 3z"/></g>
<g fill="#a9a9a9"><path d="M480 130.800h5.800l-2.900 3z"/><path d="M683 130.800h5.800l-2.900 3z"/><path d="M748 130.800h5.800l-2.900 3z"/><path d="M808 130.800h5.800l-2.900 3z"/><path d="M859 130.800h5.800l-2.900 3z"/><path d="M971 130.800h5.800l-2.900 3z"/>
<path d="M1192 72.600h5.800l-2.900 3z"/><path d="M1210.900 98.600h5.800l-2.900 3z"/><path d="M1352.700 72.300h5.800l-2.900 3z"/><path d="M1359.900 98.400h5.800l-2.900 3z"/></g>
</svg>

<span class="t" style="left:9.50px;top:112.02px;font-size:12.62px;color:#2b2626;letter-spacing:0.077px;">Close &amp;</span>
<span class="t" style="left:10.30px;top:129.02px;font-size:12.62px;color:#2b2626;letter-spacing:0.016px;">Apply</span>
<span class="t" style="left:83.40px;top:112.02px;font-size:12.62px;color:#2b2626;letter-spacing:0.191px;">New</span>
<span class="t" style="left:72.30px;top:129.02px;font-size:12.62px;color:#2b2626;letter-spacing:-0.148px;">Source</span>
<span class="t" style="left:134.30px;top:112.02px;font-size:12.62px;color:#2b2626;letter-spacing:-0.150px;">Recent</span>
<span class="t" style="left:127.20px;top:129.02px;font-size:12.62px;color:#2b2626;letter-spacing:-0.092px;">Sources</span>
<span class="t" style="left:194.20px;top:112.02px;font-size:12.62px;color:#2b2626;letter-spacing:0.115px;">Enter</span>
<span class="t" style="left:196.40px;top:129.02px;font-size:12.62px;color:#2b2626;letter-spacing:-0.107px;">Data</span>
<span class="t" style="left:16.50px;top:154.02px;font-size:12.62px;color:#3a3636;letter-spacing:-0.306px;">Close</span>
<span class="t" style="left:119.30px;top:154.02px;font-size:12.62px;color:#3a3636;letter-spacing:0.242px;">New Query</span>
<span class="t" style="left:250.10px;top:112.02px;font-size:12.62px;color:#2b2626;letter-spacing:0.263px;">Data source</span>
<span class="t" style="left:263.20px;top:129.02px;font-size:12.62px;color:#2b2626;letter-spacing:0.207px;">settings</span>
<span class="t" style="left:247.20px;top:154.02px;font-size:12.62px;color:#3a3636;letter-spacing:0.128px;">Data Sources</span>
<span class="t" style="left:352.30px;top:112.02px;font-size:12.62px;color:#2b2626;letter-spacing:0.589px;">Manage</span>
<span class="t" style="left:338.20px;top:129.02px;font-size:12.62px;color:#2b2626;letter-spacing:0.182px;">Parameters</span>
<span class="t" style="left:343.10px;top:154.02px;font-size:12.62px;color:#3a3636;letter-spacing:0.182px;">Parameters</span>
<span class="t" style="left:436.10px;top:112.02px;font-size:12.62px;color:#7f7b7b;letter-spacing:0.077px;">Refresh</span>
<span class="t" style="left:431.50px;top:129.02px;font-size:12.62px;color:#7f7b7b;letter-spacing:-0.207px;">Preview</span>
<span class="t" style="left:514.20px;top:70.02px;font-size:12.62px;color:#2b2626;letter-spacing:0.360px;">Properties</span>
<span class="t" style="left:515.20px;top:96.02px;font-size:12.62px;color:#2b2626;letter-spacing:0.234px;">Advanced Editor</span>
<span class="t" style="left:514.20px;top:122.02px;font-size:12.62px;color:#2b2626;letter-spacing:0.589px;">Manage</span>
<span class="t" style="left:505.50px;top:154.02px;font-size:12.62px;color:#3a3636;letter-spacing:-0.133px;">Query</span>
<span class="t" style="left:637.40px;top:112.02px;font-size:12.62px;color:#7f7b7b;letter-spacing:-0.070px;">Choose</span>
<span class="t" style="left:629.50px;top:129.02px;font-size:12.62px;color:#7f7b7b;letter-spacing:-0.042px;">Columns</span>
<span class="t" style="left:699.50px;top:112.02px;font-size:12.62px;color:#7f7b7b;letter-spacing:0.032px;">Remove</span>
<span class="t" style="left:694.50px;top:129.02px;font-size:12.62px;color:#7f7b7b;letter-spacing:-0.058px;">Columns</span>
<span class="t" style="left:640.40px;top:154.02px;font-size:12.62px;color:#3a3636;letter-spacing:0.291px;">Manage Columns</span>
<span class="t" style="left:777.30px;top:112.02px;font-size:12.62px;color:#7f7b7b;letter-spacing:0.255px;">Keep</span>
<span class="t" style="left:772.20px;top:129.02px;font-size:12.62px;color:#7f7b7b;letter-spacing:0.058px;">Rows</span>
<span class="t" style="left:820.30px;top:112.02px;font-size:12.62px;color:#7f7b7b;letter-spacing:0.052px;">Remove</span>
<span class="t" style="left:823.20px;top:129.02px;font-size:12.62px;color:#7f7b7b;letter-spacing:0.058px;">Rows</span>
<span class="t" style="left:780.10px;top:154.02px;font-size:12.62px;color:#3a3636;letter-spacing:0.041px;">Reduce Rows</span>
<span class="t" style="left:884.00px;top:154.02px;font-size:12.62px;color:#3a3636;letter-spacing:0.126px;">Sort</span>
<span class="t" style="left:937.10px;top:112.02px;font-size:12.62px;color:#7f7b7b;letter-spacing:-0.081px;">Split</span>
<span class="t" style="left:923.50px;top:129.02px;font-size:12.62px;color:#7f7b7b;letter-spacing:-0.107px;">Column</span>
<span class="t" style="left:986.50px;top:112.02px;font-size:12.62px;color:#7f7b7b;letter-spacing:0.217px;">Group</span>
<span class="t" style="left:997.30px;top:129.02px;font-size:12.62px;color:#7f7b7b;letter-spacing:-1.300px;">By</span>
<span class="t" style="left:1032.20px;top:70.02px;font-size:12.62px;color:#7f7b7b;letter-spacing:0.288px;">Data Type: Whole Number</span>
<span class="t" style="left:1056.20px;top:96.02px;font-size:12.62px;color:#7f7b7b;letter-spacing:0.076px;">Use First Row as Headers</span>
<span class="t" style="left:1055.20px;top:122.02px;font-size:12.62px;color:#7f7b7b;letter-spacing:0.048px;">Replace Values</span>
<span class="t" style="left:1041.40px;top:154.02px;font-size:12.62px;color:#3a3636;letter-spacing:0.215px;">Transform</span>
<span class="t" style="left:1258.20px;top:70.02px;font-size:12.62px;color:#7f7b7b;letter-spacing:0.459px;">Merge Queries</span>
<span class="t" style="left:1259.20px;top:96.02px;font-size:12.62px;color:#7f7b7b;letter-spacing:0.283px;">Append Queries</span>
<span class="t" style="left:1259.20px;top:122.02px;font-size:12.62px;color:#7f7b7b;letter-spacing:0.026px;">Combine Files</span>
<span class="t" style="left:1275.50px;top:154.02px;font-size:12.62px;color:#3a3636;letter-spacing:0.142px;">Combine</span>
<span class="t" style="left:1408.30px;top:70.02px;font-size:12.62px;color:#7f7b7b;letter-spacing:-0.021px;">Text Analytics</span>
<span class="t" style="left:1408.30px;top:96.02px;font-size:12.62px;color:#7f7b7b;letter-spacing:0.079px;">Vision</span>
<span class="t" style="left:1408.30px;top:122.02px;font-size:12.62px;color:#7f7b7b;letter-spacing:0.154px;">Azure Machine Learning</span>
<span class="t" style="left:1437.00px;top:154.02px;font-size:12.62px;color:#3a3636;letter-spacing:0.043px;">AI Insights</span>
<span class="t" style="left:24.20px;top:38.02px;font-size:12.78px;color:#ffffff;letter-spacing:-0.257px;">File</span>
<span class="t" style="left:86.00px;top:38.02px;font-size:12.78px;color:#2b2626;letter-spacing:0.583px;">Home</span>
<span class="t" style="left:157.30px;top:38.02px;font-size:12.78px;color:#2b2626;letter-spacing:0.181px;">Transform</span>
<span class="t" style="left:252.10px;top:38.02px;font-size:12.78px;color:#2b2626;letter-spacing:0.161px;">Add Column</span>
<span class="t" style="left:358.90px;top:38.02px;font-size:12.78px;color:#2b2626;letter-spacing:-0.440px;">View</span>
<span class="t" style="left:421.20px;top:38.02px;font-size:12.78px;color:#2b2626;letter-spacing:0.296px;">Tools</span>
<span class="t" style="left:486.90px;top:38.02px;font-size:12.78px;color:#2b2626;letter-spacing:0.582px;">Help</span>
<span class="t" style="left:95.60px;top:8.02px;font-size:14.73px;color:#8c8c8c;letter-spacing:-0.142px;">Ashish - Power Query Editor</span>
<span class="t" style="left:19.00px;top:187.02px;font-size:15.68px;color:#666462;letter-spacing:-0.159px;">Queries [11]</span>
<span class="t" style="left:44.10px;top:230.02px;font-size:14.5px;color:#252423;letter-spacing:-0.299px;">Sheet2</span>
<span class="t" style="left:44.10px;top:260.02px;font-size:14.5px;color:#252423;letter-spacing:-0.299px;">Sheet3</span>
<span class="t" style="left:44.10px;top:290.02px;font-size:14.5px;color:#252423;letter-spacing:-0.299px;">Sheet4</span>
<span class="t" style="left:44.10px;top:320.02px;font-size:14.5px;color:#252423;letter-spacing:-0.299px;">Sheet5</span>
<span class="t" style="left:44.10px;top:350.02px;font-size:14.5px;color:#252423;letter-spacing:-0.299px;">Sheet6</span>
<span class="t" style="left:44.10px;top:380.02px;font-size:14.5px;color:#252423;letter-spacing:-0.299px;">Sheet7</span>
<span class="t" style="left:44.10px;top:410.02px;font-size:14.5px;color:#252423;letter-spacing:-0.499px;">Sheet1</span>
<span class="t" style="left:44.10px;top:440.02px;font-size:14.5px;color:#252423;letter-spacing:-0.299px;">Sheet8</span>
<span class="t" style="left:44.10px;top:470.02px;font-size:14.5px;color:#252423;letter-spacing:-0.299px;">Sheet9</span>
<span class="t" style="left:44.10px;top:500.02px;font-size:14.5px;color:#252423;letter-spacing:-0.176px;">Sheet10</span>
<span class="t" style="left:44.10px;top:530.02px;font-size:14.5px;color:#252423;letter-spacing:-0.163px;">Sheet11</span>
<span class="t" style="left:382.90px;top:195.02px;font-size:14.8px;color:#1e1e1e;letter-spacing:-0.628px;font-family:'Liberation Mono',monospace;">= Table.SelectRows(#"Filtered Rows", <span style="color:#0000ff">each</span> [Year of Passout] &lt;&gt; <span style="color:#008080">null</span> and [Year of Passout] &lt;&gt; <span style="color:#a31515">""</span>)</span>
<span class="t" style="left:1603.00px;top:186.02px;font-size:16.13px;color:#666462;letter-spacing:-0.038px;">Query Settings</span>
<span class="t" style="left:1617.70px;top:228.02px;font-size:14.14px;color:#252423;letter-spacing:-0.436px;font-weight:700;">PROPERTIES</span>
<span class="t" style="left:1616.70px;top:253.02px;font-size:14.81px;color:#252423;letter-spacing:0.253px;">Name</span>
<span class="t" style="left:1625.00px;top:280.02px;font-size:13.81px;color:#555352;letter-spacing:-0.611px;">Sheet1</span>
<span class="t" style="left:1617.70px;top:311.02px;font-size:14.81px;color:#1a7a68;letter-spacing:-0.023px;">All Properties</span>
<span class="t" style="left:1617.70px;top:354.02px;font-size:14.14px;color:#252423;letter-spacing:-0.361px;font-weight:700;">APPLIED STEPS</span>
<span class="t" style="left:1645.90px;top:385.02px;font-size:14.77px;color:#252423;letter-spacing:-0.294px;">Source</span>
<span class="t" style="left:1645.90px;top:410.02px;font-size:14.77px;color:#252423;letter-spacing:-0.100px;">Navigation</span>
<span class="t" style="left:1645.90px;top:435.02px;font-size:14.77px;color:#252423;letter-spacing:0.090px;">Promoted Headers</span>
<span class="t" style="left:1645.90px;top:460.02px;font-size:14.77px;color:#252423;letter-spacing:-0.100px;">Changed Type</span>
<span class="t" style="left:1645.90px;top:485.02px;font-size:14.77px;color:#252423;letter-spacing:-0.100px;">Filtered Rows</span>
<span class="t" style="left:1645.90px;top:510.02px;font-size:14.77px;color:#252423;letter-spacing:-0.128px;">Filtered Rows1</span>
<!-- dialog -->
<div style="left:521px;top:350px;width:877px;height:330px;background:#fff;border:1px solid #c8c7c6;box-sizing:border-box;box-shadow:2px 2px 2px rgba(0,0,0,.34)"></div>
<svg style="left:1369px;top:360px" width="17" height="16" viewBox="0 0 17 16"><path d="M1.2 1l14.6 14M15.8 1L1.2 15" stroke="#4a4846" stroke-width="1.25" fill="none"/></svg>
<div style="left:561px;top:488px;width:289px;height:28px;background:#fff;border:1px solid #c8c6c4;box-sizing:border-box"></div>
<div style="left:561px;top:544px;width:289px;height:28px;background:#fff;border:1px solid #4f4e4d;box-sizing:border-box"></div>
<div style="left:593.5px;top:549px;width:1px;height:18px;background:#111"></div>
<div style="left:1193px;top:613px;width:75px;height:28px;background:#117865"></div>
<div style="left:1285px;top:613px;width:75px;height:28px;background:#fff;border:1px solid #6a6968;box-sizing:border-box"></div>
<span class="t" style="left:560.40px;top:381.02px;font-size:24.77px;color:#252423;letter-spacing:-0.127px;-webkit-text-stroke:0.4px #252423;">Replace Values</span>
<span class="t" style="left:560.60px;top:432.02px;font-size:15.36px;color:#3b3a39;letter-spacing:0.347px;">Replace one value with another in the selected columns.</span>
<span class="t" style="left:561.30px;top:470.02px;font-size:14.46px;color:#3b3a39;letter-spacing:0.128px;">Value To Find</span>
<span class="t" style="left:560.60px;top:526.02px;font-size:14.46px;color:#3b3a39;letter-spacing:0.054px;">Replace With</span>
<span class="t" style="left:567.70px;top:551.02px;font-size:14.98px;color:#252423;letter-spacing:0.442px;">null</span>
<span class="t" style="left:1222.20px;top:622.02px;font-size:12.58px;color:#ffffff;letter-spacing:-1.300px;">OK</span>
<span class="t" style="left:1303.10px;top:622.02px;font-size:12.58px;color:#252423;letter-spacing:-0.212px;">Cancel</span>
<!-- red annotation ticks -->
<svg style="left:0;top:0" width="1920" height="872" viewBox="0 0 1920 872">
<g fill="none" stroke="#e11b1f" stroke-linecap="round" stroke-linejoin="round">
<path d="M651.5 494.5 C652 500 652.5 505 654.5 508 C657 510.5 661 507.5 666 504.5 C677 498 689 489 699 480" stroke-width="7"/>
<path d="M660.5 548.5 C661 554 662 558.5 663.8 561 C666 563.5 670 561 675 558 C686 551 697 543.5 708 538" stroke-width="6.6"/>
<path d="M1207.5 584 C1211 588 1216 591 1217 597.5 C1225 590 1234 583 1242 576" stroke-width="7.4"/>
</g></svg>
</div></body></html>
